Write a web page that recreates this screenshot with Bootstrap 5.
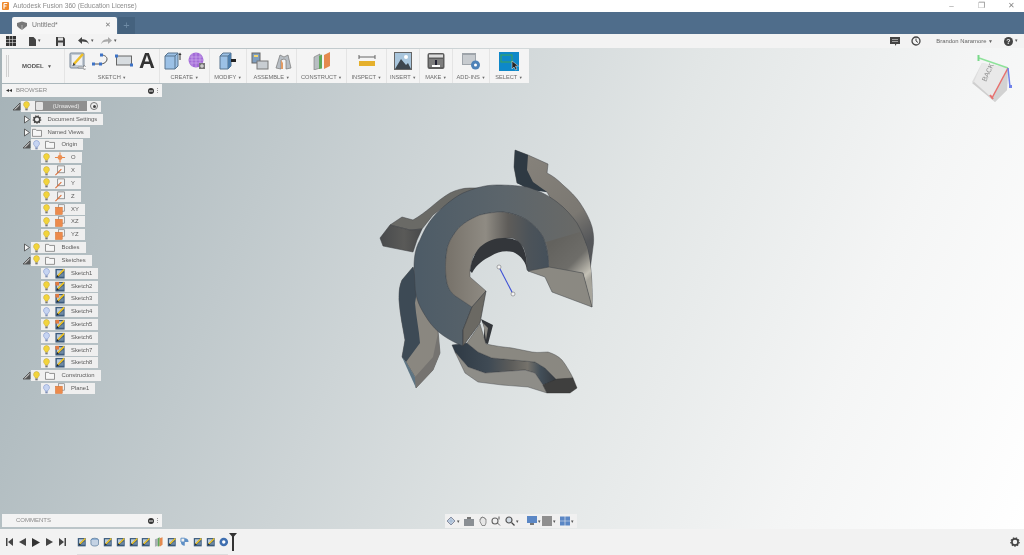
<!doctype html>
<html lang="en"><head><meta charset="utf-8"><title>Autodesk Fusion 360</title>
<link href="https://cdn.jsdelivr.net/npm/bootstrap@5.3.0/dist/css/bootstrap.min.css" rel="stylesheet">
<style>
html,body{margin:0;height:555px;overflow:hidden;background:#fff}
body{font-family:"Liberation Sans",Arial,sans-serif;font-size:6.5px;color:#666}
.app{height:555px;filter:blur(.4px)}
.ttl{height:12px;background:#fff;color:#8b8b8b;padding-left:2px;gap:5px}
.ttltx{margin-left:-1px;font-size:6.7px}
.ttl .wc{width:25px;text-align:center;font-size:8px;color:#888}
.tabbar{height:22px;background:#4f6d8b;padding:5px 0 0 12px}
.dtab{width:105px;height:17px;background:#f6f6f6;border-radius:2px 2px 0 0;padding:0 6px 0 4px;color:#777;font-size:6.8px;gap:4px}
.tabx{color:#777;font-size:7px}
.ptab{width:17px;height:17px;background:#45627e;margin-left:1px;color:#6f8ba5;font-size:11px;text-align:center;line-height:17px}
.qa{height:14px;background:#f3f3f3;position:relative}
.qa svg{display:block}
.qi1{margin-left:6px}.qi2{margin-left:13px}.qi3{margin-left:15px}.qi4{margin-left:13px}.qi5{margin-left:7px}
.qr2{margin-left:11px}
.car{font-size:5px;color:#555;margin-left:2px}
.uname{color:#666;margin:0 11px 0 15px;font-size:5.9px}
.smcar{font-size:5px}
.helpc{margin-right:6px}
.hq{width:9px;height:9px;border-radius:50%;background:#444;color:#f3f3f3;font-size:7px;font-weight:700;line-height:9px;text-align:center;display:block}
.vp{height:481px;position:relative;background:linear-gradient(112deg,#a5b2b7 0%,#b3bec2 14%,#cdd4d6 38%,#e2e6e6 58%,#f4f5f5 80%,#fff 100%);padding:1px 0 2px 2px}
.modelart{position:absolute;left:0;top:0;width:1024px;height:481px}
.tbar{height:34px;width:527px;background:#f4f4f4;position:relative}
.tg{height:34px;border-right:1px solid #e4e4e4;position:relative;padding-top:3px;justify-content:center;gap:6px}
.tg svg{display:block}
.tglabel{position:absolute;left:0;right:0;top:25px;text-align:center;font-size:5.7px;color:#6b6b6b;line-height:7px;white-space:nowrap}
.tglabel b{font-size:4px;font-weight:400}
.w-model{width:63px;padding-top:0;align-items:center}.w-sk{width:95px}.w-cr{width:50px}.w-mo{width:37px}.w-as{width:50px}.w-co{width:50px}.w-in{width:40px}.w-ins{width:33px}.w-ma{width:33px}.w-ad{width:37px}.w-se{width:38px;border-right:0}
.mdl{font-size:6px;font-weight:700;color:#555;margin-left:8px}
.grip{position:absolute;left:4px;top:6px;width:3px;height:22px;border-left:1px solid #d0d0d0;border-right:1px solid #d0d0d0}
.aa{font-size:22px;line-height:18px;font-weight:700;color:#333;width:16px;text-align:center}
.panelhd{position:relative;width:160px;height:13px;background:#f3f3f3;padding:0 4px 0 4px;color:#8a8a8a;font-size:6px;z-index:1}
.bhead{margin-top:1px}
.dbl{font-size:6px;color:#333}
.panelhd .tx{margin-left:4px}
.panelhd.cm .tx{margin-left:10px}
.pgrip{margin-left:3px;width:1px;height:5px;border-left:1px dotted #999}
.tree{position:relative;margin-top:3px;z-index:1}
.trow{height:12.83px;position:relative;display:flex;align-items:center}
.arr{width:9px;height:9px;flex:none;display:block}
.l0{padding-left:10px}.l1{padding-left:19.5px}.l2{padding-left:39px}
.pil{height:11px;background:#efefef;display:flex;align-items:center;padding:0 6px 0 0;color:#5c5c5c;font-size:5.9px;line-height:11px;white-space:nowrap;position:relative}
.pil svg{flex:none;display:block}
.b{width:11px;height:10px}
.f{width:12px;height:9px;margin-left:2px}
.d{width:12px;height:11px;margin-left:2px}
.s{width:12px;height:9px;margin-left:0}
.pil .lb{margin-left:6px}
.l2 .pil .lb{margin-left:5px}
.pil .lbn{margin-left:5px}
.chip{background:#8f8f8f;color:#eee;margin-left:3px;width:52px;height:10px;line-height:10px;text-align:center;padding-left:10px;position:relative;margin-right:3px;font-size:5.8px}
.chip i{position:absolute;left:1px;top:1px;width:7px;height:8px;background:#e4e4e4;border-radius:1px}
.rad{width:8px;height:8px;border:1px solid #777;border-radius:50%;position:relative;margin-right:-3px}
.rad:after{content:"";position:absolute;left:1.5px;top:1.5px;width:3px;height:3px;background:#444;border-radius:50%}
.spacer{flex:1}
.navbarx{position:absolute;left:445px;top:466px;width:132px;height:14px;background:#f0f0f0;padding-left:1px;z-index:1}
.navbarx svg{display:block;width:10px;height:10px;flex:none}
.navbarx .car{width:4px;margin-left:1px;flex:none;line-height:1}
.g3{margin-left:3px}.g4{margin-left:4px}.g7{margin-left:7px}.g0{margin-left:0}
.tl{height:26px;background:#f2f2f2;position:relative;padding-left:6px}
.pb{gap:6px}.pb svg{display:block}
.tlitems{gap:3.4px;margin-left:11px;position:relative}
.tlitems svg{display:block;width:9.5px;height:10px}
.tlitems svg.pin{width:8px;height:18px;margin-left:-3px;margin-top:-1px}
.gearr{margin-left:auto;margin-right:4px}
.ruler{position:absolute;left:0;right:9px;bottom:-4px;height:3px;border-bottom:1px solid #ddd}
</style></head><body>
<svg width="0" height="0" class="position-absolute">
<defs>
<symbol id="bulby" viewBox="0 0 10 12"><path d="M5 .6a3.600 3.600 0 0 0-2.200 6.400c.5.500.7 1 .7 1.600h3c0-.6.2-1.100.7-1.600A3.600 3.600 0 0 0 5 .6z" fill="#f2d43c" stroke="#b59a20" stroke-width=".5"/><rect x="3.600" y="9" width="2.800" height="2.200" fill="#777"/></symbol>
<symbol id="bulbb" viewBox="0 0 10 12"><path d="M5 .6a3.600 3.600 0 0 0-2.200 6.400c.5.500.7 1 .7 1.600h3c0-.6.2-1.100.7-1.600A3.600 3.600 0 0 0 5 .6z" fill="#c6d4f2" stroke="#6f86c4" stroke-width=".6"/><rect x="3.600" y="9" width="2.800" height="2.200" fill="#7f8fb5"/></symbol>
<symbol id="fold" viewBox="0 0 12 10"><path d="M1 1.500h3.500l1 1.200H11v6.600H1z" fill="#f6f6f6" stroke="#6e6e6e" stroke-width=".8"/></symbol>
<symbol id="gear" viewBox="0 0 12 12"><circle cx="6" cy="6" r="3.700" fill="none" stroke="#444" stroke-width="2"/><circle cx="6" cy="6" r="5" fill="none" stroke="#444" stroke-width="1.500" stroke-dasharray="1.700 1.700"/></symbol>
<symbol id="orig" viewBox="0 0 12 12"><path d="M6 .5v11M.5 6h11" stroke="#e37c3a" stroke-width="1"/><circle cx="6" cy="6" r="2.700" fill="#ec8f52"/></symbol>
<symbol id="axis" viewBox="0 0 12 12"><rect x="3.500" y="1" width="7.500" height="7.500" fill="#f3f3f3" stroke="#666" stroke-width=".7"/><path d="M1 11 7.500 4.500" stroke="#dd6b32" stroke-width="1.100"/></symbol>
<symbol id="plane" viewBox="0 0 12 12"><rect x="4.500" y=".8" width="6.500" height="7" fill="#f1f1f1" stroke="#777" stroke-width=".7"/><rect x="1" y="3.500" width="7.500" height="8" fill="#ec8a4c" stroke="#d2702f" stroke-width=".5"/></symbol>
<symbol id="skt" viewBox="0 0 12 12"><rect x="1" y="1" width="10" height="10.500" fill="#3c5b7c"/><path d="M2.500 2.500h6L2.500 9z" fill="#b9cadb"/><path d="M4 9.500h6V5z" fill="#6f8aa6"/><path d="M3.500 8.500 10.500 1.500" stroke="#f0c424" stroke-width="1.800"/><path d="M2.500 10 4.800 9.300 3 7.500z" fill="#222"/></symbol>
<symbol id="skto" viewBox="0 0 12 12"><rect x="1" y="1" width="10" height="10.500" fill="#3c5b7c"/><path d="M2.500 2.500h6L2.500 9z" fill="#b9cadb"/><path d="M4 9.500h6V5z" fill="#6f8aa6"/><rect x="1" y="1" width="4" height="4" fill="#e27a3e"/><path d="M3.500 8.500 10.500 1.500" stroke="#f0c424" stroke-width="1.800"/><path d="M2.500 10 4.800 9.300 3 7.500z" fill="#222"/></symbol>
<symbol id="tri" viewBox="0 0 9 9"><path d="M1 8 8 1v7z" fill="#bbb" stroke="#444" stroke-width=".8"/><path d="M3 8 8 3v5z" fill="#555"/></symbol>
<symbol id="rar" viewBox="0 0 9 9"><path d="M2.500 1 7.500 4.500 2.500 8z" fill="#f4f4f4" stroke="#444" stroke-width=".8"/></symbol>
<linearGradient id="gRing" gradientUnits="userSpaceOnUse" x1="420" y1="250" x2="590" y2="250"><stop offset="0" stop-color="#4e5c67"/><stop offset=".5" stop-color="#5c656b"/><stop offset="1" stop-color="#6b6a66"/></linearGradient>
<linearGradient id="gBand" gradientUnits="userSpaceOnUse" x1="447" y1="250" x2="549" y2="250"><stop offset="0" stop-color="#77726a"/><stop offset=".38" stop-color="#8f8b83"/><stop offset=".6" stop-color="#5e5c59"/><stop offset=".8" stop-color="#4c5359"/><stop offset="1" stop-color="#45505a"/></linearGradient>
<linearGradient id="gLow" gradientUnits="userSpaceOnUse" x1="452" y1="360" x2="557" y2="360"><stop offset="0" stop-color="#2e3944"/><stop offset=".35" stop-color="#3f4a54"/><stop offset=".56" stop-color="#5c5c5a"/><stop offset=".72" stop-color="#75726b"/><stop offset=".84" stop-color="#434f59"/><stop offset="1" stop-color="#35393e"/></linearGradient>
<linearGradient id="gTan" gradientUnits="userSpaceOnUse" x1="530" y1="160" x2="590" y2="240"><stop offset="0" stop-color="#85817a"/><stop offset=".7" stop-color="#7b7872"/><stop offset="1" stop-color="#55575a"/></linearGradient>
<linearGradient id="gEnd" gradientUnits="userSpaceOnUse" x1="556" y1="240" x2="592" y2="276"><stop offset="0" stop-color="#63625e"/><stop offset=".55" stop-color="#6e6d69"/><stop offset=".9" stop-color="#c3c0b5"/><stop offset="1" stop-color="#a7a59c"/></linearGradient>
<linearGradient id="gLf" gradientUnits="userSpaceOnUse" x1="380" y1="240" x2="420" y2="240"><stop offset="0" stop-color="#484a4c"/><stop offset=".6" stop-color="#5a5a58"/><stop offset="1" stop-color="#4a4b4c"/></linearGradient>
</defs></svg>
<div class="app d-flex flex-column">
<div class="ttl d-flex align-items-center">
<svg width="7" height="8" viewBox="0 0 7 8"><rect width="7" height="8" rx="1" fill="#ef8a2d"/><path d="M2 1.500h3.200M2 4h2.500M2 1.500V6.800" stroke="#fff" stroke-width="1.100" fill="none"/></svg>
<span class="ttltx">Autodesk Fusion 360 (Education License)</span>
<span class="spacer"></span><span class="wc">–</span><span class="wc">❐</span><span class="wc">✕</span>
</div>
<div class="tabbar d-flex">
<div class="dtab d-flex align-items-center"><svg width="12" height="10" viewBox="0 0 12 10"><path d="M1 2 6 .5 11 2v3L6 9 3 7 1 5z" fill="#777"/><path d="M6 4v5" stroke="#ddd" stroke-width=".6"/></svg><span>Untitled*</span><span class="spacer"></span><span class="tabx">✕</span></div>
<div class="ptab">+</div>
</div>
<div class="qa d-flex align-items-center">
<svg class="qi1" width="10" height="10" viewBox="0 0 10 10" fill="#333"><path d="M0 0h3v3H0zM3.500 0h3v3h-3zM7 0h3v3H7zM0 3.500h3v3H0zM3.500 3.500h3v3h-3zM7 3.500h3v3H7zM0 7h3v3H0zM3.500 7h3v3h-3zM7 7h3v3H7z"/></svg>
<svg class="qi2" width="7" height="9" viewBox="0 0 7 9" fill="#444"><path d="M0 0h4.500L7 2.500V9H0z"/></svg><span class="car">▾</span>
<svg class="qi3" width="9" height="9" viewBox="0 0 9 9"><path d="M0 0h7.500L9 1.500V9H0z" fill="#3f3f3f"/><rect x="2" y="0.500" width="5" height="3" fill="#ddd"/><rect x="2" y="5.500" width="5" height="3.500" fill="#ddd"/></svg>
<svg class="qi4" width="11" height="8" viewBox="0 0 11 8"><path d="M0 3.500 4 0v2.200c3.500 0 6 1.300 7 5-1.500-2-3.500-2.600-7-2.600V7z" fill="#444"/></svg><span class="car">▾</span>
<svg class="qi5" width="11" height="8" viewBox="0 0 11 8"><path d="M11 3.500 7 0v2.200c-3.500 0-6 1.300-7 5 1.500-2 3.500-2.600 7-2.600V7z" fill="#aaa"/></svg><span class="car">▾</span>
<span class="spacer"></span>
<svg width="10" height="9" viewBox="0 0 10 9"><path d="M0 0h10v7H6.500L5 9V7H0z" fill="#444"/><path d="M2 2.500h6M2 4.500h6" stroke="#ddd" stroke-width=".6"/></svg>
<svg class="qr2" width="10" height="10" viewBox="0 0 10 10"><circle cx="5" cy="5" r="4" fill="none" stroke="#444" stroke-width="1.300"/><path d="M5 2.500V5l2 1.500" fill="none" stroke="#444" stroke-width="1"/></svg>
<span class="uname">Brandon Naramore <span class="smcar">▼</span></span>
<span class="hq">?</span><span class="car helpc">▾</span>
</div>
<div class="vp d-flex flex-column">
<svg class="modelart" viewBox="0 48 1024 481">
<!-- top fin -->
<path d="M515 150 528 155 548 164 547 173C553 176 558 180 563 185C570 191 576 197 580 203C586 212 590 220 592 227C594 235 594 242 593 247L590 270 547 192 517 183 514 167z" fill="url(#gTan)" stroke="#44464a" stroke-width=".5"/>
<path d="M515 150 528 155 527 170 533 182 547 192 530 190 517 183 514 167z" fill="#2f3a43"/>
<!-- left fin -->
<path d="M390 225 402 217 413 220C420 216 425 212 430 208C437 202 443 197 450 193C456 190 463 188 470 188L483 188 450 202 433 215 422 229 410 230z" fill="#6a6a66" stroke="#3f4144" stroke-width=".5"/>
<path d="M380 238 390 225 410 230 422 229 417 240 413 252 383 246z" fill="url(#gLf)" stroke="#3a3c40" stroke-width=".5"/>
<!-- lower-left fin -->
<path d="M413 267 402 280C399 287 399 293 399 300C400 315 403 328 405 340L402 357 406 362 415 377 416 388 433 370 440 353 438 330 425 300z" fill="#8a8780" stroke="#3a3c40" stroke-width=".5"/>
<path d="M413 267 402 280C399 287 399 293 399 300C400 315 403 328 405 340L402 357 406 362 420 343C419 330 416 316 415 303L418 285z" fill="#3d4a55"/>
<path d="M402 357 406 362 415 377 416 388z" fill="#5d7483"/>
<path d="M415 377 433 357 438 333 440 353 433 370 416 388z" fill="#757370"/>
<!-- small piece behind ring -->
<path d="M481 319 493 325 488 344 484 343 484 327z" fill="#33363a"/>
<path d="M483 323 488 328 486 340z" fill="#8c8a84"/>
<!-- bottom fin -->
<path d="M452 345 467 343 478 352 492 358 535 362 545 368 557 380 543 385 535 373 525 370 485 373 468 367 455 352z" fill="url(#gLow)" stroke="#303338" stroke-width=".4"/>
<path d="M467 343 480 324 486 344C495 346 503 347 512 348L532 352C538 353 543 352 548 352C554 354 558 356 562 360C566 365 570 372 573 378L557 380 545 368 535 362 492 358 478 352z" fill="#8a8881" stroke="#3a3c40" stroke-width=".4"/>
<path d="M455 352 468 367 485 373 525 370 535 373 543 385 547 393 528 387 502 385 478 382 465 373z" fill="#8e8d88" stroke="#3f4246" stroke-width=".4"/>
<path d="M543 385 557 379 573 378 577 388 570 393 547 393z" fill="#3f3f3e" stroke="#2e2e2e" stroke-width=".4"/>
<!-- ring outer -->
<path d="M463 346C448 340 436 332 428 320C420 308 415 298 415 285L414 268C414 255 416 247 420 240C425 228 430 220 437 213C447 203 455 197 463 193C475 188 485 185 497 185C510 185 520 186 527 187C537 190 548 195 557 202C565 208 572 216 577 223C582 232 585 240 587 247C590 258 593 280 592 307L549 270C549 262 548 250 543 237C539 230 534 225 527 220C520 216 512 213 503 212C495 212 488 213 480 215C470 219 462 224 457 230C451 238 448 244 447 250C445 262 445 272 447 283C449 290 452 294 457 297L472 307 463 330z" fill="url(#gRing)" stroke="#3a3f44" stroke-width=".5"/>
<!-- concave band -->
<path d="M447 250C448 244 451 238 457 230C462 224 470 219 480 215C488 213 495 212 503 212C512 213 520 216 527 220C534 225 539 230 543 237C548 250 549 262 549 270L528 271 527 270C527 258 525 250 523 247C518 241 514 238 510 238C503 238 497 239 490 242C482 247 476 252 473 257L470 270 470 277 486 291 472 307 457 297C452 294 449 290 447 283C445 272 445 262 447 250z" fill="url(#gBand)" stroke="#3a3f44" stroke-width=".4"/>
<path d="M470 271C471 262 474 254 480 247C487 241 495 238 503 238C511 238 517 240 520 243C525 249 527 258 527 270C526 263 522 256 513 252C505 250 497 252 491 256C483 260 477 264 472 273z" fill="#33363a"/>
<!-- right end -->
<path d="M549 270C549 262 549 250 546 242L580 232 587 247C590 258 593 280 592 307L583 273 549 268z" fill="url(#gEnd)"/>
<path d="M528 271 549 267 583 273 592 307 552 292 545 277z" fill="#8b8982" stroke="#3f4246" stroke-width=".5"/>
<!-- cut face -->
<path d="M472 307 486 291 480 323 463 346 463 330z" fill="#6b6963" stroke="#35383b" stroke-width=".6"/>
<!-- sketch line -->
<path d="M499 267 513 294" stroke="#3d50d6" stroke-width="1.100"/>
<circle cx="499" cy="267" r="2" fill="#f4f4f4" stroke="#777" stroke-width=".6"/><circle cx="513" cy="294" r="2" fill="#f4f4f4" stroke="#777" stroke-width=".6"/>
<!-- view cube -->
<path d="M982 63 1008 68 1007 90 995 102 972 82z" fill="#dedede"/>
<path d="M982 63 1008 68 992 98 974 82z" fill="#e9e9e9"/>
<path d="M974 82 992 98 995 102 972 83z" fill="#cfcfcf"/>
<path d="M992 98 1008 68 1007 90 995 102z" fill="#d2d2d2"/>
<text x="986" y="82" transform="rotate(-65 986 82)" font-size="7" fill="#8d8d8d" font-family="Liberation Sans">BACK</text>
<path d="M979 58 1008 68" stroke="#8ee29a" stroke-width="1.500"/><path d="M978.500 55v6" stroke="#7ad98a" stroke-width="2"/>
<path d="M1008 68 992 98" stroke="#e8706e" stroke-width="1.500"/><path d="M990 95l3 4" stroke="#e8706e" stroke-width="2"/>
<path d="M1008 68l2 19" stroke="#6f82ea" stroke-width="1.500"/><path d="M1009 85h3v3h-3z" fill="#6f82ea"/>
</svg>
<div class="tbar d-flex">
<div class="tg w-model d-flex"><span class="grip"></span><span class="mdl">MODEL &nbsp;<span class="smcar">▼</span></span></div>
<div class="tg w-sk d-flex">
<svg width="17" height="18" viewBox="0 0 17 18"><rect x="1" y="1" width="14" height="15" rx="1" fill="#c3cbd4" stroke="#7d8b9b"/><rect x="3" y="3" width="10" height="10" fill="#eef0f3"/><path d="M5 12 14 2" stroke="#efbf25" stroke-width="2.500"/><path d="M3.500 14 6.500 13 4.500 10.500z" fill="#444"/><path d="M9 15h6v-2l3 3-3 2v-2H9z" fill="#fff" stroke="#666" stroke-width=".5"/></svg>
<svg width="17" height="18" viewBox="0 0 17 18"><path d="M2 12H8C12 12 15 10 15 7C15 5 13 3 9 3" fill="none" stroke="#555" stroke-width="1"/><g fill="#3e73c6"><rect x="0" y="10.500" width="3" height="3"/><rect x="7" y="10.500" width="3" height="3"/><rect x="8" y="1.500" width="3" height="3"/></g></svg>
<svg width="18" height="18" viewBox="0 0 18 18"><rect x="1.500" y="4" width="15" height="9" fill="#d7dce0" stroke="#666"/><rect x="0" y="2.500" width="3" height="3" fill="#3e73c6"/><rect x="15" y="11.500" width="3" height="3" fill="#3e73c6"/></svg>
<span class="aa">A</span>
<span class="tglabel">SKETCH <b>▼</b></span></div>
<div class="tg w-cr d-flex">
<svg width="18" height="18" viewBox="0 0 18 18"><path d="M1 4 4 1h10v13l-3 3H1z" fill="#9cc1e6" stroke="#58748f"/><path d="M1 4h10v13M11 4l3-3" fill="none" stroke="#58748f"/><path d="M16 8V2" stroke="#333"/><path d="M14.500 3 16 .5 17.500 3z" fill="#333"/></svg>
<svg width="17" height="18" viewBox="0 0 17 18"><circle cx="8" cy="8" r="7.500" fill="#a36bd8"/><path d="M1 5h14M.5 8h15M1 11h14M4 1v14M8 .5v15M12 1v14" stroke="#d5b6ef" stroke-width=".6"/><rect x="11" y="11" width="6" height="6" fill="#777"/><path d="M14 12v4M12 14h4" stroke="#fff" stroke-width=".8"/></svg>
<span class="tglabel">CREATE <b>▼</b></span></div>
<div class="tg w-mo d-flex">
<svg width="18" height="18" viewBox="0 0 18 18"><path d="M1 4 4 1h8v13l-3 3H1z" fill="#9cc1e6" stroke="#58748f"/><path d="M9 4H1M9 4v13M9 4l3-3" fill="none" stroke="#58748f"/><path d="M12 1v13l-3 3V4z" fill="#4f7fad"/><rect x="12" y="7" width="5" height="3" fill="#222"/></svg>
<span class="tglabel">MODIFY <b>▼</b></span></div>
<div class="tg w-as d-flex">
<svg width="18" height="18" viewBox="0 0 18 18"><rect x="1" y="1" width="8" height="10" fill="#7f9ebf" stroke="#666"/><rect x="3" y="3" width="4" height="2" fill="#f4d66e"/><rect x="6" y="9" width="11" height="8" fill="#c8cdd2" stroke="#777"/></svg>
<svg width="17" height="18" viewBox="0 0 17 18"><path d="M1 16 5 3l4 2 4-2 3 13-5 1V8L9 7 6 8v9z" fill="#b8bec4" stroke="#777" stroke-width=".7"/><path d="M6 8l2 3v6L6 17z" fill="#e29a63"/></svg>
<span class="tglabel">ASSEMBLE <b>▼</b></span></div>
<div class="tg w-co d-flex">
<svg width="18" height="18" viewBox="0 0 18 18"><path d="M1 5 7 2v14l-6 2z" fill="#b8bec2" stroke="#777" stroke-width=".6"/><path d="M6 4l3-1.500v14L6 17z" fill="#5da85a"/><path d="M11 3l6-3v14l-6 3z" fill="#e48a4f"/></svg>
<span class="tglabel">CONSTRUCT <b>▼</b></span></div>
<div class="tg w-in d-flex">
<svg width="18" height="18" viewBox="0 0 18 18"><path d="M1 5h16M1 3v4M17 3v4" stroke="#666"/><rect x="1" y="9" width="16" height="5" fill="#e5b02c"/></svg>
<span class="tglabel">INSPECT <b>▼</b></span></div>
<div class="tg w-ins d-flex">
<svg width="18" height="18" viewBox="0 0 18 18"><rect x=".5" y=".5" width="17" height="17" fill="#a9c6dd" stroke="#666"/><circle cx="12" cy="5" r="2" fill="#fff"/><path d="M1 17 7 7l5 6 2-2 3 6z" fill="#3d464e"/></svg>
<span class="tglabel">INSERT <b>▼</b></span></div>
<div class="tg w-ma d-flex">
<svg width="18" height="18" viewBox="0 0 18 18"><rect x=".5" y="1" width="17" height="16" rx="2" fill="#5c5c5c"/><rect x="2" y="2.500" width="14" height="3" fill="#ddd"/><rect x="2" y="7" width="14" height="8" fill="#7d7d7d"/><path d="M5 13h8v2H5z" fill="#fff"/><path d="M8 8h2v5H8z" fill="#223"/></svg>
<span class="tglabel">MAKE <b>▼</b></span></div>
<div class="tg w-ad d-flex">
<svg width="18" height="18" viewBox="0 0 18 18"><rect x="0" y="1" width="14" height="12" fill="#9ea4aa"/><rect x="1" y="3" width="12" height="9" fill="#c7cbcf"/><circle cx="13.500" cy="13" r="4.500" fill="#4d82b8"/><circle cx="13.500" cy="13" r="1.500" fill="#fff"/></svg>
<span class="tglabel">ADD-INS <b>▼</b></span></div>
<div class="tg w-se d-flex">
<svg width="20" height="19" viewBox="0 0 20 19"><rect width="20" height="19" fill="#0e88c9"/><rect x="2" y="3" width="11" height="7" fill="none" stroke="#3da356" stroke-width="1"/><path d="M13 9v8l2-2 1.500 3 1.500-.7L16.500 14l3 0z" fill="#222" stroke="#eee" stroke-width=".5"/></svg>
<span class="tglabel">SELECT <b>▼</b></span></div>
</div>
<div class="panelhd bhead d-flex align-items-center"><span class="dbl">◂◂</span><span class="tx">BROWSER</span><span class="spacer"></span><svg width="6" height="6" viewBox="0 0 6 6"><circle cx="3" cy="3" r="3" fill="#333"/><rect x="1" y="2.500" width="4" height="1" fill="#eee"/></svg><span class="pgrip"></span></div>
<div class="tree">
<div class="trow l0"><svg class="arr"><use href="#tri"/></svg><span class="pil"><svg class="b"><use href="#bulby"/></svg><span class="chip"><i></i>(Unsaved)</span><span class="rad"></span></span></div>
<div class="trow l1"><svg class="arr"><use href="#rar"/></svg><span class="pil"><svg class="s"><use href="#gear"/></svg><span class="lbn">Document Settings</span></span></div>
<div class="trow l1"><svg class="arr"><use href="#rar"/></svg><span class="pil"><svg class="s"><use href="#fold"/></svg><span class="lbn">Named Views</span></span></div>
<div class="trow l1"><svg class="arr"><use href="#tri"/></svg><span class="pil"><svg class="b"><use href="#bulbb"/></svg><svg class="f"><use href="#fold"/></svg><span class="lb">Origin</span></span></div>
<div class="trow l2"><span class="pil"><svg class="b"><use href="#bulby"/></svg><svg class="d"><use href="#orig"/></svg><span class="lb">O</span></span></div>
<div class="trow l2"><span class="pil"><svg class="b"><use href="#bulby"/></svg><svg class="d"><use href="#axis"/></svg><span class="lb">X</span></span></div>
<div class="trow l2"><span class="pil"><svg class="b"><use href="#bulby"/></svg><svg class="d"><use href="#axis"/></svg><span class="lb">Y</span></span></div>
<div class="trow l2"><span class="pil"><svg class="b"><use href="#bulby"/></svg><svg class="d"><use href="#axis"/></svg><span class="lb">Z</span></span></div>
<div class="trow l2"><span class="pil"><svg class="b"><use href="#bulby"/></svg><svg class="d"><use href="#plane"/></svg><span class="lb">XY</span></span></div>
<div class="trow l2"><span class="pil"><svg class="b"><use href="#bulby"/></svg><svg class="d"><use href="#plane"/></svg><span class="lb">XZ</span></span></div>
<div class="trow l2"><span class="pil"><svg class="b"><use href="#bulby"/></svg><svg class="d"><use href="#plane"/></svg><span class="lb">YZ</span></span></div>
<div class="trow l1"><svg class="arr"><use href="#rar"/></svg><span class="pil"><svg class="b"><use href="#bulby"/></svg><svg class="f"><use href="#fold"/></svg><span class="lb">Bodies</span></span></div>
<div class="trow l1"><svg class="arr"><use href="#tri"/></svg><span class="pil"><svg class="b"><use href="#bulby"/></svg><svg class="f"><use href="#fold"/></svg><span class="lb">Sketches</span></span></div>
<div class="trow l2"><span class="pil"><svg class="b"><use href="#bulbb"/></svg><svg class="d"><use href="#skt"/></svg><span class="lb">Sketch1</span></span></div>
<div class="trow l2"><span class="pil"><svg class="b"><use href="#bulby"/></svg><svg class="d"><use href="#skto"/></svg><span class="lb">Sketch2</span></span></div>
<div class="trow l2"><span class="pil"><svg class="b"><use href="#bulby"/></svg><svg class="d"><use href="#skto"/></svg><span class="lb">Sketch3</span></span></div>
<div class="trow l2"><span class="pil"><svg class="b"><use href="#bulbb"/></svg><svg class="d"><use href="#skt"/></svg><span class="lb">Sketch4</span></span></div>
<div class="trow l2"><span class="pil"><svg class="b"><use href="#bulby"/></svg><svg class="d"><use href="#skto"/></svg><span class="lb">Sketch5</span></span></div>
<div class="trow l2"><span class="pil"><svg class="b"><use href="#bulbb"/></svg><svg class="d"><use href="#skt"/></svg><span class="lb">Sketch6</span></span></div>
<div class="trow l2"><span class="pil"><svg class="b"><use href="#bulby"/></svg><svg class="d"><use href="#skto"/></svg><span class="lb">Sketch7</span></span></div>
<div class="trow l2"><span class="pil"><svg class="b"><use href="#bulby"/></svg><svg class="d"><use href="#skt"/></svg><span class="lb">Sketch8</span></span></div>
<div class="trow l1"><svg class="arr"><use href="#tri"/></svg><span class="pil"><svg class="b"><use href="#bulby"/></svg><svg class="f"><use href="#fold"/></svg><span class="lb">Construction</span></span></div>
<div class="trow l2"><span class="pil"><svg class="b"><use href="#bulbb"/></svg><svg class="d"><use href="#plane"/></svg><span class="lb">Plane1</span></span></div>
</div>
<span class="spacer"></span>
<div class="panelhd cm d-flex align-items-center"><span class="tx">COMMENTS</span><span class="spacer"></span><svg width="6" height="6" viewBox="0 0 6 6"><circle cx="3" cy="3" r="3" fill="#333"/><rect x="1" y="2.500" width="4" height="1" fill="#eee"/></svg><span class="pgrip"></span></div>
<div class="navbarx d-flex align-items-center">
<svg viewBox="0 0 10 10"><path d="M5 1 9 5 5 9 1 5z" fill="#c5d3e4" stroke="#667" stroke-width=".7"/><path d="M5 1v8M1 5h8" stroke="#8ba5c6" stroke-width=".5"/></svg><span class="car">▾</span>
<svg class="g3" viewBox="0 0 10 10"><rect y="3" width="10" height="7" fill="#8a8f94"/><rect x="3" y="1" width="4" height="2" fill="#777"/></svg>
<svg class="g4" viewBox="0 0 10 10"><path d="M2 5.500V3h1V1.500h1V1h1v.5h1V2h1v1h1v4L7 9.500H4z" fill="#e6e6e6" stroke="#555" stroke-width=".6"/></svg>
<svg class="g3" viewBox="0 0 10 10"><circle cx="4" cy="5" r="3" fill="none" stroke="#666" stroke-width="1.100"/><path d="M6.500 7 9 9.500" stroke="#666"/><path d="M8 .5v3" stroke="#555"/></svg>
<svg class="g4" viewBox="0 0 10 10"><circle cx="4" cy="4" r="3" fill="#d5dde5" stroke="#555" stroke-width="1.200"/><path d="M6.500 6.500 9.500 9.500" stroke="#444" stroke-width="1.300"/></svg><span class="car">▾</span>
<svg class="g7" viewBox="0 0 10 10"><rect width="10" height="7" fill="#5b87c5"/><rect x="3" y="7" width="4" height="2" fill="#777"/></svg><span class="car">▾</span>
<svg class="g0" viewBox="0 0 10 10"><rect width="10" height="10" fill="#8f8f8f"/></svg><span class="car">▾</span>
<svg class="g3" viewBox="0 0 10 10"><path d="M0 .5h4.700v4.200H0zM5.300.5H10v4.200H5.300zM0 5.300h4.700v4.200H0zM5.300 5.300H10v4.200H5.300z" fill="#5b87c5"/></svg><span class="car">▾</span>
</div>
</div>
<div class="tl d-flex align-items-center">
<div class="pb d-flex align-items-center">
<svg width="7" height="8" viewBox="0 0 7 8" fill="#444"><path d="M0 0h1.500v8H0zM7 0v8L2 4z"/></svg>
<svg width="7" height="8" viewBox="0 0 7 8" fill="#444"><path d="M7 0v8L0 4z"/></svg>
<svg width="8" height="9" viewBox="0 0 8 9" fill="#333"><path d="M0 0v9l8-4.500z"/></svg>
<svg width="7" height="8" viewBox="0 0 7 8" fill="#444"><path d="M0 0v8l7-4z"/></svg>
<svg width="7" height="8" viewBox="0 0 7 8" fill="#444"><path d="M7 0H5.500v8H7zM0 0v8l5-4z"/></svg>
</div>
<div class="tlitems d-flex align-items-center">
<svg><use href="#skt"/></svg>
<svg viewBox="0 0 10 10"><ellipse cx="5" cy="3" rx="4" ry="2" fill="#8fb0d6" stroke="#4d6f93" stroke-width=".7"/><path d="M1 3v4c0 3 8 3 8 0V3" fill="#c5d3e4" stroke="#4d6f93" stroke-width=".7"/></svg>
<svg><use href="#skt"/></svg>
<svg><use href="#skt"/></svg>
<svg><use href="#skt"/></svg>
<svg><use href="#skt"/></svg>
<svg viewBox="0 0 10 10"><path d="M1 2 4 1v8L1 10z" fill="#a8aeb2"/><path d="M4 1l2-1v9L4 10z" fill="#5da85a"/><path d="M6 1l3-1v8L6 10z" fill="#e48a4f"/></svg>
<svg><use href="#skt"/></svg>
<svg viewBox="0 0 10 10"><path d="M5 1a4 4 0 0 1 4 4H5zM5 9a4 4 0 0 1-4-4h4z" fill="#5f8fc5"/><path d="M1 1h4v4H1z" fill="none" stroke="#5f8fc5"/></svg>
<svg><use href="#skt"/></svg>
<svg><use href="#skt"/></svg>
<svg viewBox="0 0 10 10"><circle cx="5" cy="5" r="4.500" fill="#3f6fb0"/><circle cx="5" cy="5" r="1.800" fill="#fff"/></svg>
<svg class="pin" viewBox="0 0 8 18"><path d="M0 0h8L5 3.500V18H3V3.500z" fill="#333"/></svg>
<span class="ruler"></span>
</div>
<svg class="gearr" width="10" height="10"><use href="#gear"/></svg>
</div>
</div>
</body></html>
